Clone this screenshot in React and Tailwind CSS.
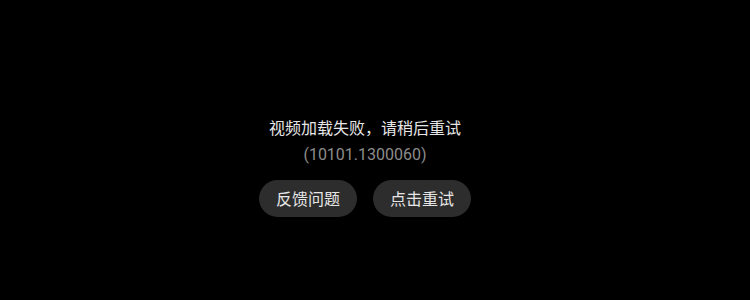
export default function App() {
  return (
    <div
      className="w-[750px] h-[300px] bg-black flex flex-col items-center pt-[117px] pr-[20px]"
      style={{ fontFamily: '"Noto Sans CJK SC", "Liberation Sans", sans-serif' }}
    >
      <div className="text-[16px] leading-[20px] text-[#e6e6e6]">视频加载失败，请稍后重试</div>
      <div
        className="mt-[8px] text-[16px] leading-[20px] text-[#8c8c8c]"
        style={{ fontFamily: 'Roboto, "Noto Sans CJK SC", sans-serif' }}
      >
        (10101.1300060)
      </div>
      <div className="mt-[15px] flex gap-[16px]">
        <button className="h-[37px] px-[17px] rounded-full bg-[#2d2d2d] text-[16px] leading-[21px] text-[#e6e6e6]">
          反馈问题
        </button>
        <button className="h-[37px] px-[17px] rounded-full bg-[#2d2d2d] text-[16px] leading-[21px] text-[#e6e6e6]">
          点击重试
        </button>
      </div>
    </div>
  );
}
